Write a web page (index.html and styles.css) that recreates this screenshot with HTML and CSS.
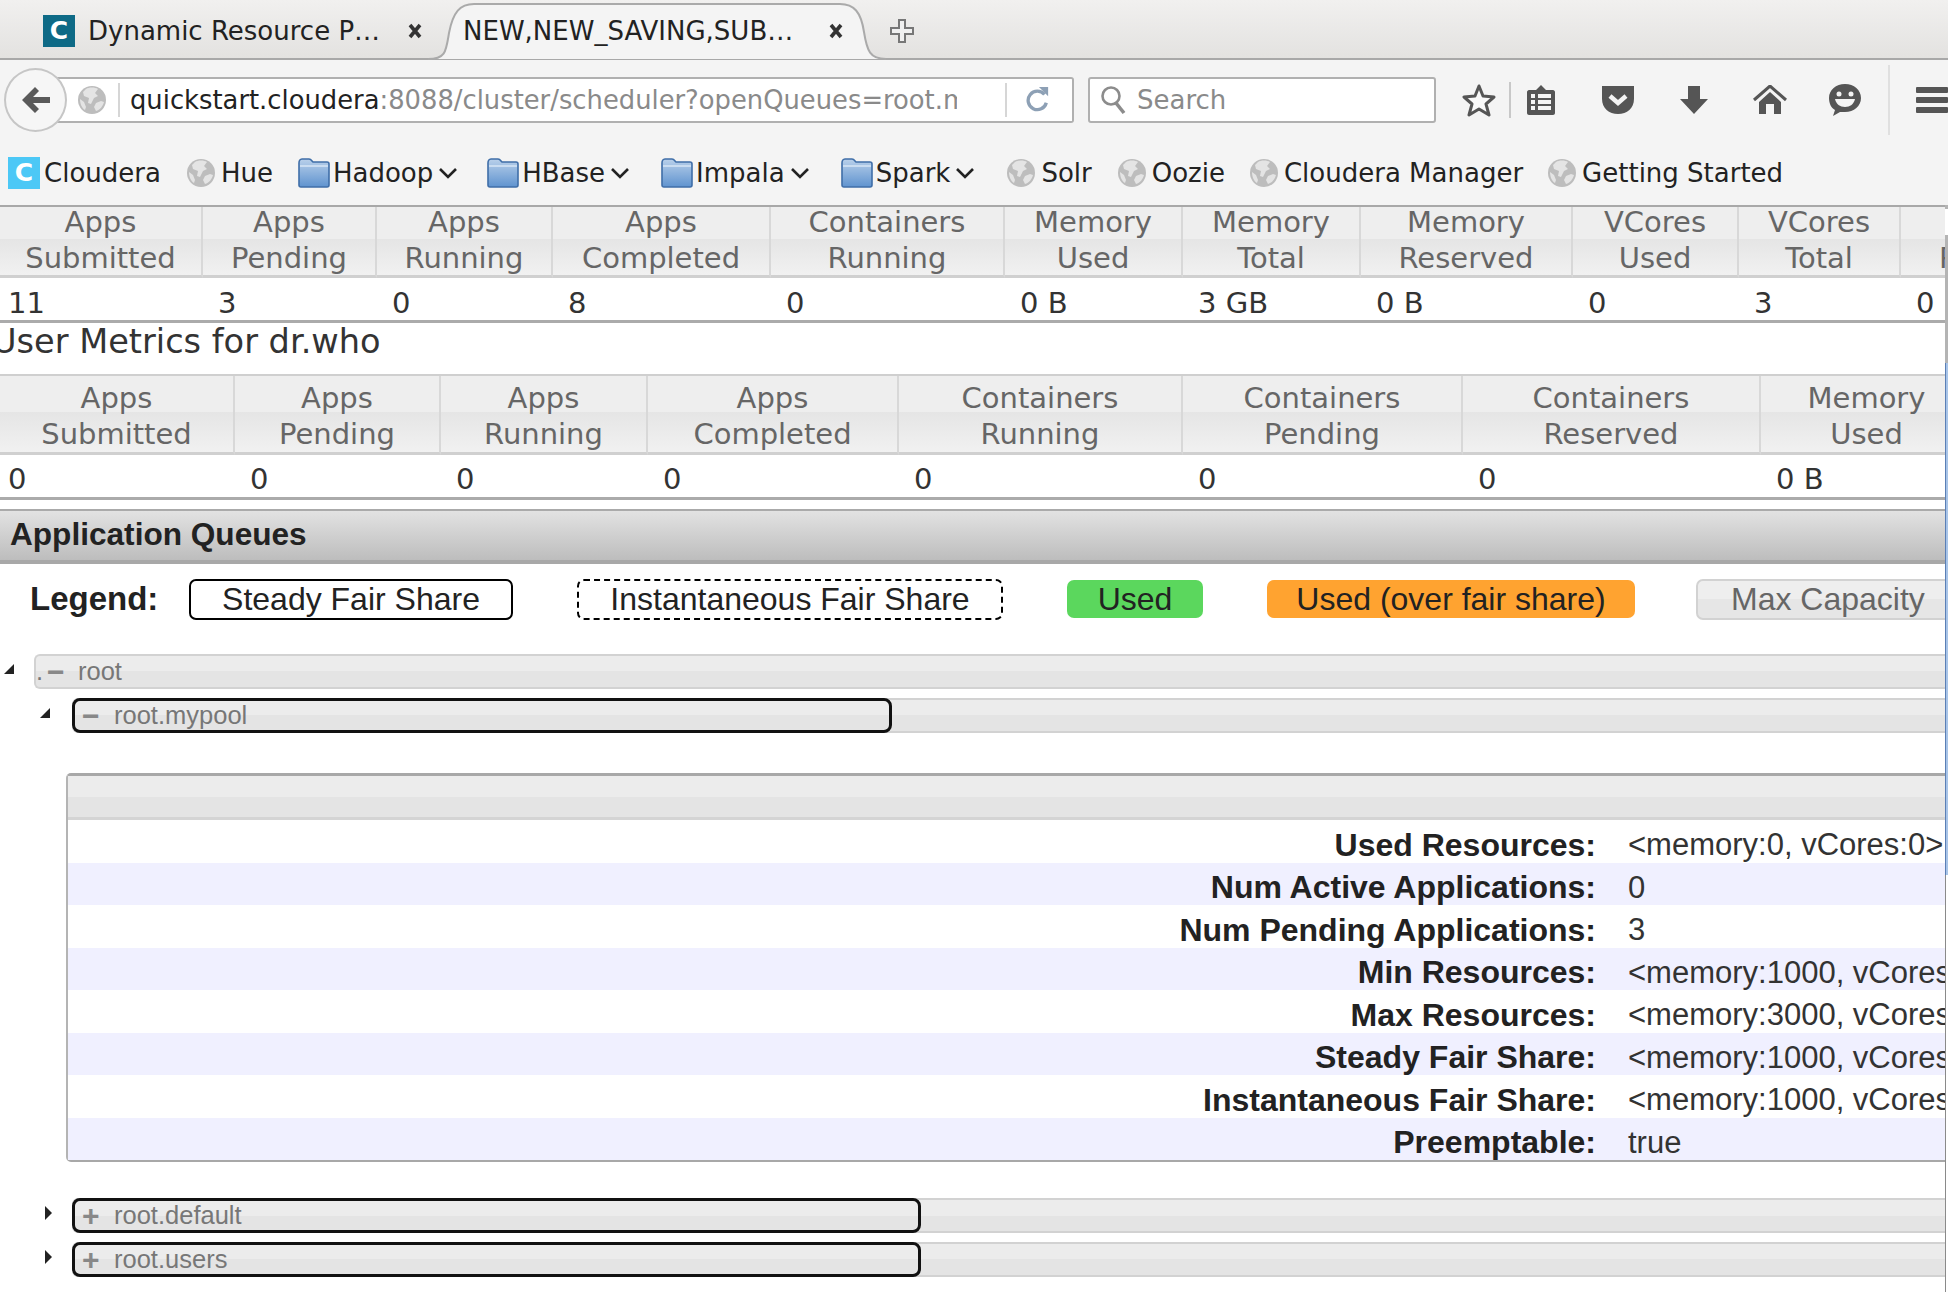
FILE: index.html
```html
<!DOCTYPE html>
<html lang="en">
<head>
<meta charset="UTF-8">
<title>NEW,NEW_SAVING,SUBMITTED,ACCEPTED,RUNNING Applications</title>
<link rel="stylesheet" href="styles.css">
</head>
<body>
<!-- shared icons -->
<svg class="defs" width="0" height="0">
  <defs>
    <linearGradient id="folder-fill" x1="0" y1="0" x2="0" y2="1">
      <stop offset="0" stop-color="#b9d0ea"/>
      <stop offset="1" stop-color="#5f93cf"/>
    </linearGradient>
  </defs>
  <symbol id="globe" viewBox="0 0 28 28">
    <circle cx="14" cy="14" r="14" fill="#bdbdbd"/>
    <path d="M8 3c3-2 9-2 12 0l-3 4 3 3-4 2-3 6-3-1 1-5-5-2-1-4zM18 17l5-2 3 1c-1 4-4 8-8 9l-2-4zM2 13l4 3 2 5-1 3c-3-2-5-6-5-11z" fill="#e4e4e4"/>
  </symbol>
  <symbol id="folder" viewBox="0 0 32 30">
    <path d="M1 5c0-2 1-4 3-4h7c2 0 3 2 4 3h14c1 0 2 1 2 2v21c0 1-1 2-2 2H3c-1 0-2-1-2-2z" fill="url(#folder-fill)" stroke="#3f6ea8" stroke-width="1.6"/>
    <path d="M2 8h28" stroke="#dbe8f6" stroke-width="1.4"/>
  </symbol>
  <symbol id="chevron" viewBox="0 0 20 12">
    <path d="M2 2l8 8 8-8" fill="none" stroke="#222" stroke-width="2.6"/>
  </symbol>
  <symbol id="close" viewBox="0 0 16 16">
    <path d="M3 2l10 12M13 2L3 14" fill="none" stroke="#333" stroke-width="3.6"/>
  </symbol>
</svg>

<div class="tabbar">
  <div class="tab">
    <span class="favicon">C</span>
    <span class="tab-title">Dynamic Resource P…</span>
    <svg class="tab-close"><use href="#close"/></svg>
  </div>
  <div class="tab tab-active">
    <svg class="tab-shape" width="470" height="60" viewBox="0 0 470 60">
      <path d="M0 59c18 0 18-8 21-26C25 12 32 4 46 4h366c14 0 21 8 24 28 3 19 6 27 22 27" fill="#f4f4f4" stroke="#aaa" stroke-width="2"/>
    </svg>
    <span class="tab-title">NEW,NEW_SAVING,SUB…</span>
    <svg class="tab-close"><use href="#close"/></svg>
  </div>
  <svg class="new-tab" width="26" height="26" viewBox="0 0 26 26">
    <path d="M10 2h6v8h8v6h-8v8h-6v-8H2v-6h8z" fill="#f0f0f0" stroke="#777" stroke-width="2"/>
  </svg>
</div>

<div class="navbar">
  <div class="back">
    <svg width="32" height="32" viewBox="0 0 32 32"><path d="M15 3L2 16l13 13 4-4-6-6h17v-6H13l6-6z" fill="#5a5a5a"/></svg>
  </div>
  <div class="urlbar">
    <svg class="url-globe"><use href="#globe"/></svg>
    <span class="url-sep"></span>
    <div class="url-text"><span class="host">quickstart.cloudera</span>:8088/cluster/scheduler?openQueues=root.mypool</div>
    <span class="url-sep"></span>
    <svg class="reload" width="24" height="28" viewBox="0 0 26 30">
      <path d="M20 9a10 10 0 1 0 2 9" fill="none" stroke="#8da0b5" stroke-width="3.6"/>
      <path d="M14 1h10v10z" fill="#8da0b5"/>
    </svg>
  </div>
  <div class="searchbar">
    <svg width="28" height="30" viewBox="0 0 28 30"><circle cx="11" cy="11" r="8.5" fill="none" stroke="#8c8c8c" stroke-width="2.6"/><path d="M16 18l8 10" stroke="#8c8c8c" stroke-width="3.6"/></svg>
    <span>Search</span>
  </div>
  <div class="tools">
    <svg class="star" width="34" height="34" viewBox="0 0 34 34"><path d="M17 3l4 10 11 1-8 7 3 11-10-6-10 6 3-11-8-7 11-1z" fill="#f8f8f8" stroke="#555" stroke-width="3" stroke-linejoin="round"/></svg>
    <span class="tool-sep"></span>
    <svg class="clip" width="30" height="32" viewBox="0 0 30 32"><path d="M3 6h7l5-5 5 5h7c1 0 2 1 2 2v21c0 1-1 2-2 2H3c-1 0-2-1-2-2V8c0-1 1-2 2-2z" fill="#555"/><path d="M5 10h4v4H5zm7 0h13v4H12zM5 16h4v4H5zm7 0h13v4H12zM5 22h4v4H5zm7 0h13v4H12z" fill="#f4f4f4"/></svg>
    <svg class="pocket" width="34" height="30" viewBox="0 0 34 30"><path d="M1 1h32v13c0 9-7 15-16 15S1 23 1 14z" fill="#555"/><path d="M9 11l8 7 8-7" fill="none" stroke="#f4f4f4" stroke-width="4.5"/></svg>
    <svg class="download" width="30" height="30" viewBox="0 0 30 30"><path d="M9 1h12v13h8L15 29 1 14h8z" fill="#555"/></svg>
    <svg class="home" width="34" height="30" viewBox="0 0 34 30"><path d="M1 15L17 1l16 14" fill="none" stroke="#555" stroke-width="3"/><path d="M17 7l11 10v12h-7V19h-8v10H6V17z" fill="#555"/></svg>
    <svg class="smile" width="34" height="32" viewBox="0 0 34 32"><path d="M17 0c9 0 16 6 16 14s-7 14-16 14c-2 0-4 0-5 0l-7 4 2-6C3 24 1 19 1 14 1 6 8 0 17 0z" fill="#555"/><circle cx="11" cy="10" r="2.5" fill="#f4f4f4"/><circle cx="23" cy="10" r="2.5" fill="#f4f4f4"/><path d="M7 15h20c-1 5-5 8-10 8s-9-3-10-8z" fill="#f4f4f4"/></svg>
    <span class="tool-sep tool-sep-tall"></span>
    <div class="hamburger"><i></i><i></i><i></i></div>
  </div>
</div>

<div class="bookmarks">
  <a class="mark"><span class="favicon favicon-light">C</span>Cloudera</a>
  <a class="mark m-hue"><svg class="mark-globe"><use href="#globe"/></svg>Hue</a>
  <a class="mark m-hadoop"><svg class="mark-folder"><use href="#folder"/></svg>Hadoop<svg class="mark-chev"><use href="#chevron"/></svg></a>
  <a class="mark m-menu"><svg class="mark-folder"><use href="#folder"/></svg>HBase<svg class="mark-chev"><use href="#chevron"/></svg></a>
  <a class="mark m-menu"><svg class="mark-folder"><use href="#folder"/></svg>Impala<svg class="mark-chev"><use href="#chevron"/></svg></a>
  <a class="mark m-spark"><svg class="mark-folder"><use href="#folder"/></svg>Spark<svg class="mark-chev"><use href="#chevron"/></svg></a>
  <a class="mark"><svg class="mark-globe"><use href="#globe"/></svg>Solr</a>
  <a class="mark m-oozie"><svg class="mark-globe"><use href="#globe"/></svg>Oozie</a>
  <a class="mark m-cm"><svg class="mark-globe"><use href="#globe"/></svg>Cloudera Manager</a>
  <a class="mark"><svg class="mark-globe"><use href="#globe"/></svg>Getting Started</a>
</div>

<div class="page">
  <div class="content">
    <table class="metrics cluster">
      <thead>
        <tr>
          <th><span>Apps<br>Submitted</span></th><th><span>Apps<br>Pending</span></th><th><span>Apps<br>Running</span></th><th><span>Apps<br>Completed</span></th>
          <th><span>Containers<br>Running</span></th><th><span>Memory<br>Used</span></th><th><span>Memory<br>Total</span></th><th><span>Memory<br>Reserved</span></th>
          <th><span>VCores<br>Used</span></th><th><span>VCores<br>Total</span></th><th><span>VCores<br>Reserved</span></th>
        </tr>
      </thead>
      <tbody>
        <tr><td>11</td><td>3</td><td>0</td><td>8</td><td>0</td><td>0 B</td><td>3 GB</td><td>0 B</td><td>0</td><td>3</td><td>0</td></tr>
      </tbody>
    </table>

    <h3 class="user-title">User Metrics for dr.who</h3>

    <table class="metrics user">
      <thead>
        <tr>
          <th>Apps<br>Submitted</th><th>Apps<br>Pending</th><th>Apps<br>Running</th><th>Apps<br>Completed</th>
          <th>Containers<br>Running</th><th>Containers<br>Pending</th><th>Containers<br>Reserved</th><th>Memory<br>Used</th>
        </tr>
      </thead>
      <tbody>
        <tr><td>0</td><td>0</td><td>0</td><td>0</td><td>0</td><td>0</td><td>0</td><td>0 B</td></tr>
      </tbody>
    </table>

    <h2 class="section-head">Application Queues</h2>

    <div class="legend">
      <b class="legend-label">Legend:</b>
      <span class="key key-steady">Steady Fair Share</span>
      <span class="key key-inst">Instantaneous Fair Share</span>
      <span class="key key-used">Used</span>
      <span class="key key-over">Used (over fair share)</span>
      <span class="key key-max">Max Capacity</span>
    </div>

    <div class="queue queue-root">
      <i class="arrow arrow-open"></i>
      <div class="bar"><span class="dot">.</span><span class="sign">−</span>root</div>
    </div>

    <div class="queue queue-child">
      <i class="arrow arrow-open"></i>
      <div class="bar">
        <div class="share" style="width: 820px"></div>
        <span class="sign">−</span>root.mypool
      </div>
    </div>

    <div class="details">
      <div class="details-head"></div>
      <div class="row"><b>Used Resources:</b><span>&lt;memory:0, vCores:0&gt;</span></div>
      <div class="row"><b>Num Active Applications:</b><span>0</span></div>
      <div class="row"><b>Num Pending Applications:</b><span>3</span></div>
      <div class="row"><b>Min Resources:</b><span>&lt;memory:1000, vCores:1&gt;</span></div>
      <div class="row"><b>Max Resources:</b><span>&lt;memory:3000, vCores:3&gt;</span></div>
      <div class="row"><b>Steady Fair Share:</b><span>&lt;memory:1000, vCores:0&gt;</span></div>
      <div class="row"><b>Instantaneous Fair Share:</b><span>&lt;memory:1000, vCores:0&gt;</span></div>
      <div class="row"><b>Preemptable:</b><span>true</span></div>
    </div>

    <div class="queue queue-child queue-shut queue-first">
      <i class="arrow arrow-shut"></i>
      <div class="bar">
        <div class="share" style="width: 849px"></div>
        <span class="sign">+</span>root.default
      </div>
    </div>

    <div class="queue queue-child queue-shut">
      <i class="arrow arrow-shut"></i>
      <div class="bar">
        <div class="share" style="width: 849px"></div>
        <span class="sign">+</span>root.users
      </div>
    </div>
  </div>

  <div class="scrollbar">
    <div class="sb-top"></div>
    <div class="sb-thumb"></div>
    <div class="sb-rest"></div>
  </div>
</div>
</body>
</html>
```

FILE: styles.css
```css
/* Page */
html, body {
  margin: 0;
  height: 1292px;
  overflow: hidden;
  background: #fff;
}

body {
  font-family: "DejaVu Sans", sans-serif;
  color: #222;
}

.defs {
  position: absolute;
}

/* Tab strip */
.tabbar {
  display: flex;
  align-items: center;
  height: 55px;
  padding-top: 3px;
  border-bottom: 2px solid #a8a8a8;
  background: linear-gradient(#f1f0ef, #e3e2e0);
  font-size: 26px;
}

.tab {
  display: flex;
  align-items: center;
  width: 420px;
  padding-left: 43px;
  position: relative;
}

.tab-active {
  width: 400px;
  padding-left: 35px;
  margin-left: -35px;
  height: 55px;
}

.tab-shape {
  position: absolute;
  left: 0;
  top: -3px;
}

.tab-title {
  position: relative;
  margin-left: 13px;
  width: 319px;
  white-space: nowrap;
}

.tab-active .tab-title {
  margin-left: 0;
  width: 365px;
}

.tab-close {
  position: relative;
  width: 16px;
  height: 16px;
  flex: none;
}

.favicon {
  display: flex;
  align-items: center;
  justify-content: center;
  flex: none;
  width: 32px;
  height: 32px;
  background: #0e6a86;
  color: #fff;
  font-weight: bold;
  font-size: 25px;
}

.favicon-light {
  background: #4cc8f6;
  margin-right: 4px;
}

.new-tab {
  margin-left: 26px;
}

/* Navigation toolbar */
.navbar {
  display: flex;
  align-items: center;
  height: 80px;
  background: #f4f4f4;
  font-size: 26px;
}

.back {
  display: flex;
  align-items: center;
  justify-content: center;
  position: relative;
  z-index: 1;
  flex: none;
  box-sizing: border-box;
  width: 63px;
  height: 64px;
  margin-left: 4px;
  border: 2px solid #c6c6c6;
  border-radius: 50%;
  background: #f6f6f6;
}

.urlbar {
  display: flex;
  align-items: center;
  box-sizing: border-box;
  width: 1030px;
  height: 46px;
  margin-left: -20px;
  padding-left: 31px;
  border: 2px solid #b0b0b0;
  border-left: 0;
  border-radius: 0 3px 3px 0;
  background: #fff;
}

.url-globe {
  width: 28px;
  height: 28px;
  flex: none;
}

.url-sep {
  flex: none;
  width: 2px;
  height: 34px;
  margin-left: 12px;
  background: #d6d6d6;
}

.url-text {
  width: 827px;
  margin-left: 10px;
  margin-right: 36px;
  overflow: hidden;
  white-space: nowrap;
  font-size: 25.8px;
  color: #8a8a8a;
}

.host {
  color: #222;
}

.reload {
  margin-left: 19px;
}

.searchbar {
  display: flex;
  align-items: center;
  gap: 9px;
  box-sizing: border-box;
  width: 349px;
  height: 46px;
  margin-left: 14px;
  padding-left: 10px;
  border: 2px solid #b0b0b0;
  border-radius: 3px;
  background: #fff;
  color: #8a8a8a;
}

.tools {
  display: flex;
  align-items: center;
  margin-left: 26px;
}

.tool-sep {
  width: 2px;
  height: 36px;
  margin-left: 13px;
  background: #c8c8c8;
}

.tool-sep-tall {
  height: 70px;
  margin-left: 26px;
  background: #e0e0e0;
}

.clip { margin-left: 15px; }
.pocket { margin-left: 45px; }
.download { margin-left: 44px; }
.home { margin-left: 44px; }
.smile { margin-left: 41px; }

.hamburger {
  display: flex;
  flex-direction: column;
  gap: 4px;
  width: 32px;
  margin-left: 26px;
}

.hamburger i {
  height: 6px;
  background: #555;
  border-radius: 1px;
}

/* Bookmarks */
.bookmarks {
  display: flex;
  align-items: center;
  box-sizing: border-box;
  height: 65px;
  padding-left: 8px;
  background: #f4f4f4;
  font-size: 26px;
  color: #222;
}

.mark {
  display: flex;
  align-items: center;
  white-space: nowrap;
  margin-right: 26px;
}

.m-hue { margin-right: 25px; }
.m-hadoop { margin-right: 29px; }
.m-menu { margin-right: 31px; }
.m-spark { margin-right: 32px; }
.m-oozie, .m-cm { margin-right: 25px; }

.mark-globe {
  width: 28px;
  height: 28px;
  margin-right: 6px;
  flex: none;
}

.mark-folder {
  width: 32px;
  height: 30px;
  margin-right: 3px;
  flex: none;
}

.mark-chev {
  width: 20px;
  height: 12px;
  margin-left: 5px;
  flex: none;
}

/* Main frame */
.page {
  display: flex;
  height: 1087px;
}

.content {
  flex: none;
  width: 1945px;
  overflow: hidden;
}

.scrollbar {
  display: flex;
  flex-direction: column;
  flex: none;
  width: 3px;
}

.sb-top {
  height: 158px;
  background: linear-gradient(#b4b4b4 4px, #fff 4px, #fff 30px, #b4b4b4 30px);
}

.sb-thumb {
  height: 512px;
  background: #a8c4e8;
  box-shadow: inset 1px 0 0 #5b7fb5;
}

.sb-rest {
  flex: 1;
  background: #fff;
  box-shadow: inset 1px 0 0 #8a8a8a;
}

/* Metrics tables */
.metrics {
  table-layout: fixed;
  border-collapse: separate;
  border-spacing: 0;
  font-size: 29px;
}

.cluster {
  width: 2114px;
  border-top: 2px solid #a8a8a8;
  border-bottom: 3px solid #ababab;
}

.user {
  width: 1974px;
  border-top: 2px solid #cfcfcf;
  border-bottom: 3px solid #ababab;
}

.metrics th {
  box-sizing: border-box;
  height: 71px;
  padding: 0;
  border-right: 2px solid #d8d8d8;
  border-bottom: 3px solid #d0d0d0;
  background: linear-gradient(#eeeeee 47%, #e5e5e5 47%, #f1f1f1);
  color: #666;
  font-weight: normal;
  line-height: 36px;
}

.cluster th span {
  display: block;
  margin: -3px 0 -1px;
}

.user th {
  height: 79px;
  padding: 4px 0 0;
}

.metrics td {
  box-sizing: border-box;
  height: 42px;
  padding: 7px 0 0 15px;
  color: #333;
  white-space: nowrap;
}

.user td {
  height: 42px;
  padding-top: 6px;
}

.metrics td:first-child {
  padding-left: 8px;
}

.cluster th:nth-child(1) { width: 203px; }
.cluster th:nth-child(2) { width: 174px; }
.cluster th:nth-child(3) { width: 176px; }
.cluster th:nth-child(4) { width: 218px; }
.cluster th:nth-child(5) { width: 234px; }
.cluster th:nth-child(6) { width: 178px; }
.cluster th:nth-child(7) { width: 178px; }
.cluster th:nth-child(8) { width: 212px; }
.cluster th:nth-child(9) { width: 166px; }
.cluster th:nth-child(10) { width: 162px; }

.user th:nth-child(1) { width: 235px; }
.user th:nth-child(2) { width: 206px; }
.user th:nth-child(3) { width: 207px; }
.user th:nth-child(4) { width: 251px; }
.user th:nth-child(5) { width: 284px; }
.user th:nth-child(6) { width: 280px; }
.user th:nth-child(7) { width: 298px; }

.user-title {
  height: 51px;
  margin: 0 0 0 -8px;
  font-size: 33.6px;
  font-weight: normal;
  line-height: 38px;
  color: #333;
}

/* Application queues */
.section-head {
  box-sizing: border-box;
  height: 55px;
  margin: 9px 0 0;
  padding-left: 10px;
  border-top: 2px solid #aaa;
  border-bottom: 4px solid #a8a8a8;
  background: linear-gradient(#e2e2e2, #bdbdbd);
  font-family: "Liberation Sans", sans-serif;
  font-size: 31.6px;
  line-height: 47px;
  color: #222;
}

.legend {
  display: flex;
  align-items: center;
  gap: 64px;
  height: 42px;
  margin-top: 14px;
  font-family: "Liberation Sans", sans-serif;
  font-size: 32px;
}

.legend-label {
  flex: none;
  width: 95px;
  margin-left: 30px;
  font-size: 33px;
}

.key {
  display: flex;
  align-items: center;
  justify-content: center;
  flex: none;
  box-sizing: border-box;
  height: 41px;
  border-radius: 7px;
}

.key-steady {
  width: 324px;
  border: 2px solid #000;
}

.key-inst {
  width: 426px;
  border: 2px dashed #000;
}

.key-used {
  width: 136px;
  height: 38px;
  background: #5bd75d;
}

.key-over {
  width: 368px;
  height: 38px;
  background: #ffa330;
}

.key-max {
  justify-content: flex-start;
  width: 262px;
  margin-left: -3px;
  padding-left: 33px;
  border: 2px solid #d2d2d2;
  background: linear-gradient(#eeeeee 50%, #e6e6e6 50%);
  color: #666;
}

.queue {
  display: flex;
  align-items: center;
  font-family: "Liberation Sans", sans-serif;
  font-size: 25.5px;
  color: #777;
}

.queue-root {
  margin-top: 34px;
}

.queue-child {
  margin-top: 9px;
  padding-left: 40px;
}

.queue-shut {
  margin-top: 9px;
}

.queue-shut.queue-first {
  margin-top: 36px;
}

.bar {
  display: flex;
  align-items: center;
  position: relative;
  flex: 1;
  box-sizing: border-box;
  height: 35px;
  margin-left: 22px;
  padding-left: 10px;
  border-top: 2px solid #d2d2d2;
  border-bottom: 2px solid #d2d2d2;
  border-radius: 6px 0 0 6px;
  background: linear-gradient(#ececec 50%, #e4e4e4 50%);
}

.queue-root .bar {
  margin-left: 20px;
  padding-left: 0;
  border-left: 2px solid #d2d2d2;
}

.queue-shut .bar {
  margin-left: 20px;
}

.share {
  position: absolute;
  left: 0;
  top: -2px;
  box-sizing: border-box;
  height: 35px;
  border: 3px solid #111;
  border-radius: 8px;
}

.sign {
  width: 32px;
  font-size: 30px;
  font-weight: bold;
  color: #888;
}

.queue-root .sign {
  width: 31px;
  margin-left: 6px;
}

.dot {
  width: 5px;
}

.arrow {
  flex: none;
  width: 0;
  height: 0;
}

.arrow-open {
  margin-top: -6px;
  border-bottom: 10px solid #222;
  border-left: 10px solid transparent;
}

.queue-root .arrow-open {
  margin-left: 4px;
}

.arrow-shut {
  margin-left: 5px;
  margin-top: -6px;
  border-left: 7px solid #222;
  border-top: 7px solid transparent;
  border-bottom: 7px solid transparent;
}

.details {
  margin: 40px 0 0 66px;
  border-left: 2px solid #b4b4b4;
  border-top: 3px solid #a8a8a8;
  border-bottom: 2px solid #a8a8a8;
  border-radius: 5px 0 0 5px;
  font-family: "Liberation Sans", sans-serif;
  font-size: 32px;
  color: #222;
}

.details-head {
  box-sizing: border-box;
  height: 44px;
  border-bottom: 3px solid #d4d4d4;
  background: linear-gradient(#ececec 50%, #e4e4e4 50%);
}

.row {
  display: flex;
  align-items: center;
  box-sizing: border-box;
  height: 42.5px;
  padding-top: 8px;
}

.row:nth-child(odd) {
  background: #f0f0ff;
}

.row b {
  flex: none;
  width: 1528px;
  text-align: right;
}

.row span {
  margin-left: 32px;
  font-size: 31px;
  color: #333;
  white-space: nowrap;
}
```
